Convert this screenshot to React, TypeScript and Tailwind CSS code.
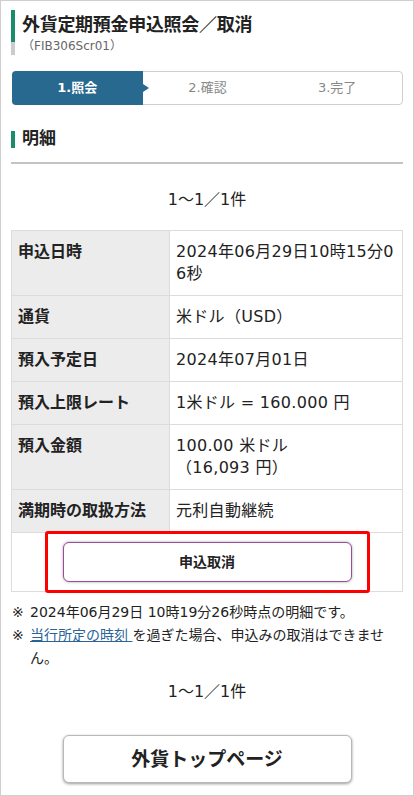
import React from "react";

// ── Data ─────────────────────────────────────────────────────
const ROWS: { label: string; value: React.ReactNode }[] = [
  { label: "申込日時", value: "2024年06月29日10時15分06秒" },
  { label: "通貨", value: "米ドル（USD）" },
  { label: "預入予定日", value: "2024年07月01日" },
  { label: "預入上限レート", value: "1米ドル = 160.000 円" },
  {
    label: "預入金額",
    value: (
      <>
        100.00 米ドル
        <br />
        （16,093 円）
      </>
    ),
  },
  { label: "満期時の取扱方法", value: "元利自動継続" },
];

const STEPS = ["1.照会", "2.確認", "3.完了"];

const FONT = "font-['DejaVu_Sans','Noto_Sans_CJK_JP',sans-serif]";

// ── Component ─────────────────────────────────────────────────
export default function App() {
  return (
    <div
      className={`w-[414px] h-[796px] overflow-hidden border border-[#cfcfcf] bg-white px-[10px] text-[#222] ${FONT}`}
    >
      {/* ── Page title ── */}
      <div className="mt-[9px] flex">
        <div className="flex w-[4px] shrink-0 flex-col">
          <div className="h-[32px] bg-[#1a8b6b]" />
          <div className="h-[13px] bg-[#cccccc]" />
        </div>
        <div className="pl-[7px]">
          <h1 className="pt-[2px] text-[18px] font-bold leading-[26px] tracking-[-0.3px]">
            外貨定期預金申込照会／取消
          </h1>
          <p className="text-[12px] leading-[16px] text-[#666]">（FIB306Scr01）</p>
        </div>
      </div>

      {/* ── Step bar ── */}
      <div className="mt-[16px] ml-[1px] grid h-[34px] grid-cols-3 rounded-[4px] border border-[#cfcfcf] text-[13px]">
        {STEPS.map((s, i) => (
          <div
            key={s}
            className={
              i === 0
                ? "relative -my-px -ml-px flex items-center justify-center rounded-l-[4px] bg-[#28698f] font-bold text-white"
                : "flex items-center justify-center text-[#888]"
            }
          >
            {s}
            {i === 0 && (
              <span className="absolute top-1/2 right-[-6px] -translate-y-1/2 border-y-[4px] border-l-[6px] border-y-transparent border-l-[#28698f]" />
            )}
          </div>
        ))}
      </div>

      {/* ── Section header ── */}
      <div className="mt-[24px] border-b-2 border-[#c4c4c4] pb-[13px]">
        <div className="flex h-[20px] items-center">
          <span className="h-[17px] w-[4px] bg-[#1a8b6b]" />
          <span className="pl-[7px] text-[17px] font-bold">明細</span>
        </div>
      </div>

      <p className="mt-[24px] text-center text-[16px] leading-[24px]">1〜1／1件</p>

      {/* ── Detail table ── */}
      <table className="mt-[18px] w-full border-collapse text-[16px] leading-[22px]">
        <tbody>
          {ROWS.map((r) => (
            <tr key={r.label}>
              <th className="w-[158px] border border-[#dcdcdc] bg-[#ececec] px-[6px] py-[10px] text-left align-top font-bold">
                {r.label}
              </th>
              <td className="border border-[#dcdcdc] px-[6px] py-[10px] align-top break-all tracking-[0.3px]">
                {r.value}
              </td>
            </tr>
          ))}
          <tr>
            <td colSpan={2} className="h-[58px] border border-[#dcdcdc] p-0">
              <div className="-mt-[2px] -mb-[2px] flex justify-center">
                <div className="rounded-[3px] border-[3px] border-[#ff0000] px-[15px] py-[8px]">
                  <button className="h-[40px] w-[289px] rounded-[6px] border border-[#9c4a99] bg-white text-[14px] font-bold shadow-[0_0_3px_rgba(0,0,0,0.35)]">
                    申込取消
                  </button>
                </div>
              </div>
            </td>
          </tr>
        </tbody>
      </table>

      {/* ── Notes ── */}
      <div className="mt-[9px] ml-[1px] text-[14px] leading-[23px]">
        <div className="flex">
          <span className="w-[18px] shrink-0">※</span>
          <span>2024年06月29日 10時19分26秒時点の明細です。</span>
        </div>
        <div className="flex">
          <span className="w-[18px] shrink-0">※</span>
          <span>
            <a href="#" className="text-[#2a6496] underline">
              当行所定の時刻&nbsp;
            </a>
            を過ぎた場合、申込みの取消はできません。
          </span>
        </div>
      </div>

      <p className="mt-[10px] text-center text-[16px] leading-[24px]">1〜1／1件</p>

      {/* ── Back to top ── */}
      <div className="mt-[31px] flex justify-center">
        <button className="h-[48px] w-[289px] rounded-[6px] border border-[#b8b8b8] bg-white text-[19px] font-bold shadow-[0_1px_3px_rgba(0,0,0,0.4)]">
          外貨トップページ
        </button>
      </div>
    </div>
  );
}
